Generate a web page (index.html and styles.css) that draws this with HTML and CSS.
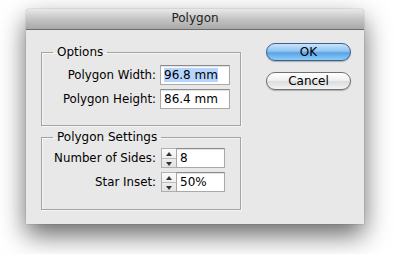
FILE: index.html
```html
<!DOCTYPE html>
<html>
<head>
<meta charset="utf-8">
<link rel="stylesheet" href="styles.css">
</head>
<body>
<div class="window">
  <div class="titlebar">Polygon</div>
  <div class="content">
    <div class="groups">
      <fieldset class="group group-options">
        <legend>Options</legend>
        <div class="rows">
          <label class="label">Polygon Width:</label>
          <div class="field"><span class="sel">96.8 mm</span></div>
          <label class="label">Polygon Height:</label>
          <div class="field">86.4 mm</div>
        </div>
      </fieldset>
      <fieldset class="group group-settings">
        <legend>Polygon Settings</legend>
        <div class="rows">
          <label class="label">Number of Sides:</label>
          <div class="spinfield">
            <div class="spinner"><span class="up"></span><span class="down"></span></div>
            <div class="field small">8</div>
          </div>
          <label class="label">Star Inset:</label>
          <div class="spinfield">
            <div class="spinner"><span class="up"></span><span class="down"></span></div>
            <div class="field small">50%</div>
          </div>
        </div>
      </fieldset>
    </div>
    <div class="buttons">
      <button class="btn btn-default">OK</button>
      <button class="btn">Cancel</button>
    </div>
  </div>
</div>
</body>
</html>
```
FILE: styles.css
```css
html, body {
  margin: 0;
  padding: 0;
  background: #ffffff;
  width: 400px;
  height: 254px;
  overflow: hidden;
  font-family: "DejaVu Sans", "Liberation Sans", sans-serif;
  font-size: 11.8px;
  color: #000;
}
.window {
  margin: 9px 0 0 26px;
  width: 338px;
  height: 215px;
  background: #e8e8e8;
  box-shadow: 0 11px 26px rgba(0,0,0,0.6), 0 0 1px rgba(0,0,0,0.6);
  border-radius: 4px 4px 0 0;
  display: flex;
  flex-direction: column;
}
.titlebar {
  height: 20px;
  line-height: 19px;
  text-align: center;
  font-size: 12px;
  color: #222;
  background: linear-gradient(#e9e9e9, #c4c4c4 50%, #a9a9a9);
  border-bottom: 1px solid #6c6c6c;
  border-radius: 4px 4px 0 0;
}
.content {
  display: flex;
  padding: 0 0 0 15px;
}
.groups {
  display: flex;
  flex-direction: column;
  width: 200px;
  padding-top: 15px;
  gap: 4px;
}
.group {
  margin: 0;
  padding: 0;
  border: 1px solid #a4a4a4;
  box-shadow: inset 1px 1px 0 #f6f6f6, 1px 1px 0 #f6f6f6;
  min-width: 0;
}
.group legend {
  margin-left: 11px;
  padding: 0 4px;
  font-size: 12px;
  line-height: 14px;
}
.rows {
  display: grid;
  grid-template-columns: 114px auto;
  column-gap: 4px;
  row-gap: 4px;
  align-items: center;
  justify-items: start;
}
.group-options .rows {
  padding: 6px 0 16px 0;
}
.group-settings .rows {
  padding: 4px 0 17px 0;
}
.label {
  justify-self: end;
  white-space: nowrap;
}
.field {
  box-sizing: border-box;
  width: 70px;
  height: 20px;
  background: #fff;
  border: 1px solid #a9a9a9;
  border-top-color: #8a8a8a;
  box-shadow: inset 0 1px 1px rgba(0,0,0,0.12);
  padding: 2px 0 0 3px;
  line-height: 14px;
  font-size: 12px;
}
.field.small {
  width: 49px;
}
.sel {
  background: #b5d5ff;
}
.spinfield {
  display: flex;
  margin-left: 1px;
}
.spinner {
  box-sizing: border-box;
  width: 15px;
  height: 20px;
  border: 1px solid #b0b0b0;
  border-right: none;
  background: linear-gradient(#fbfbfb, #e2e2e2);
  display: flex;
  flex-direction: column;
}
.spinner span {
  flex: 1;
  position: relative;
}
.spinner .up {
  border-bottom: 1px solid #bdbdbd;
}
.spinner .up::after,
.spinner .down::after {
  content: "";
  position: absolute;
  left: 4px;
  width: 0;
  height: 0;
  border-left: 3px solid transparent;
  border-right: 3px solid transparent;
}
.spinner .up::after {
  top: 3px;
  border-bottom: 4px solid #333;
}
.spinner .down::after {
  top: 3px;
  border-top: 4px solid #333;
}
.buttons {
  display: flex;
  flex-direction: column;
  gap: 11px;
  margin-left: 25px;
  padding-top: 13px;
}
.btn {
  box-sizing: border-box;
  width: 85px;
  height: 18px;
  border-radius: 9px;
  border: 1px solid #707070;
  background: linear-gradient(#ffffff, #f1f1f1 45%, #dcdcdc 55%, #f4f4f4);
  font-family: "DejaVu Sans", "Liberation Sans", sans-serif;
  font-size: 12px;
  line-height: 15px;
  color: #000;
  padding: 0;
  box-shadow: 0 1px 1px rgba(0,0,0,0.25);
}
.btn-default {
  border-color: #3a6090;
  background: linear-gradient(#c9e4fb, #8fc3f1 45%, #5aa2e6 55%, #8ccdf8);
}
```
